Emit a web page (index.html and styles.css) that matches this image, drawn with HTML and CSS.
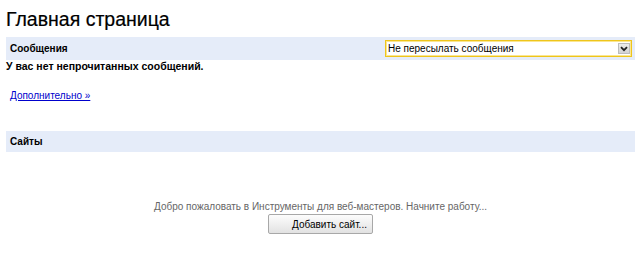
FILE: index.html
```html
<!DOCTYPE html>
<html lang="ru">
<head>
<meta charset="utf-8">
<title>Главная страница</title>
<link rel="stylesheet" href="styles.css">
</head>
<body>
<div class="page">
  <h1 class="title">Главная страница</h1>
  <div class="band band-messages">
    <span class="band-label">Сообщения</span>
    <span class="select-wrap">
      <select class="select">
        <option>Не пересылать сообщения</option>
      </select>
      <span class="select-arrow"><svg width="8" height="6" viewBox="0 0 8 6"><path d="M1 1.2 L4 4.2 L7 1.2" fill="none" stroke="#222" stroke-width="1.8"/></svg></span>
    </span>
  </div>
  <p class="notice">У вас нет непрочитанных сообщений.</p>
  <p class="more"><a href="#">Дополнительно »</a></p>
  <div class="band band-sites">
    <span class="band-label">Сайты</span>
  </div>
  <div class="welcome">
    <p class="welcome-text">Добро пожаловать в Инструменты для веб-мастеров. Начните работу...</p>
    <button class="add-btn" type="button">Добавить сайт...</button>
  </div>
</div>
</body>
</html>
```
FILE: styles.css
```css
html, body {
  margin: 0;
  padding: 0;
  background: #fff;
}
body {
  font-family: "Liberation Sans", Arial, sans-serif;
  color: #000;
}
.page {
  padding: 6px 5px 0 6px;
}
.title {
  margin: 0;
  font-size: 19.5px;
  font-weight: normal;
  line-height: 24px;
  padding-top: 1px;
  color: #000;
  -webkit-text-stroke: 0.2px #000;
}
.band {
  background: #e5ecf9;
  display: flex;
  align-items: center;
  justify-content: space-between;
}
.band-messages {
  margin-top: 6px;
  height: 23px;
}
.band-sites {
  margin-top: 29px;
  height: 21px;
}
.band-label {
  font-size: 10px;
  font-weight: bold;
  padding-left: 4px;
}
.select-wrap {
  position: relative;
  display: block;
  margin-right: 3px;
}
.select {
  appearance: none;
  -webkit-appearance: none;
  display: block;
  box-sizing: border-box;
  width: 247px;
  height: 17px;
  margin: 0;
  padding: 0 0 0 2px;
  border: 1px solid #eec51c;
  box-shadow: inset 0 0 0 1px #fbe690;
  border-radius: 0;
  background: #fff;
  font-family: "Liberation Sans", Arial, sans-serif;
  font-size: 10px;
  color: #000;
  outline: none;
}
.select-arrow {
  position: absolute;
  top: 3px;
  right: 2px;
  width: 12px;
  height: 11px;
  background: linear-gradient(#ececec, #d2d2d2);
  border: 1px solid #bcbcbc;
  box-sizing: border-box;
  display: flex;
  align-items: center;
  justify-content: center;
}
.notice {
  margin: 0;
  font-size: 10.5px;
  font-weight: bold;
  line-height: 13px;
}
.more {
  margin: 16px 0 0 4px;
  font-size: 10px;
  line-height: 13px;
}
.more a {
  color: #0000cc;
}
.welcome {
  display: flex;
  flex-direction: column;
  align-items: center;
  margin-top: 48px;
}
.welcome-text {
  margin: 0;
  font-size: 10px;
  line-height: 13px;
  color: #666;
}
.add-btn {
  margin-top: 1px;
  height: 20px;
  padding: 0 5px 0 23px;
  font-family: "Liberation Sans", Arial, sans-serif;
  font-size: 10px;
  color: #000;
  border: 1px solid #a8a8a8;
  border-radius: 2px;
  background: linear-gradient(#fdfdfd, #e2e2e2);
}
```
